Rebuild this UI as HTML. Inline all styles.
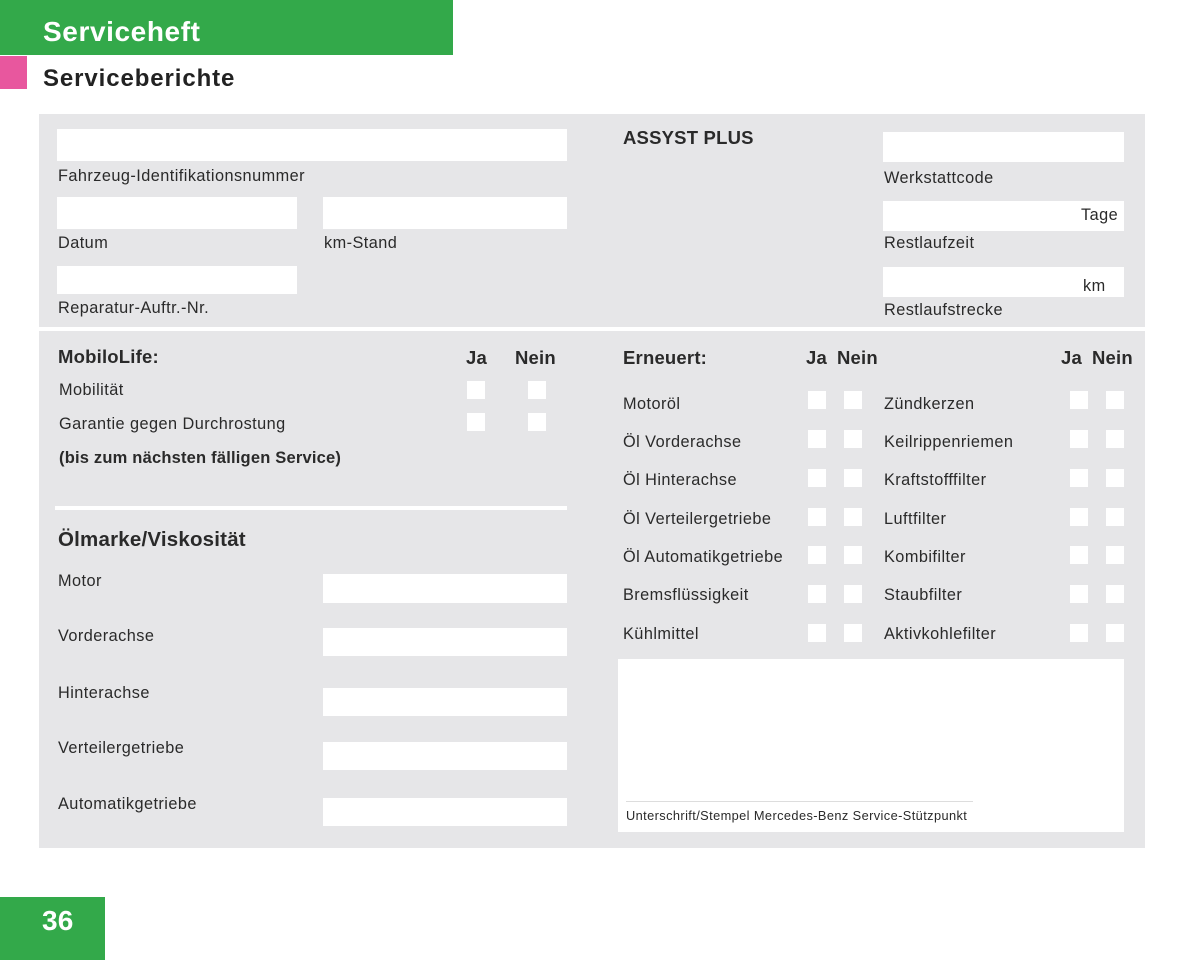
<!DOCTYPE html>
<html><head><meta charset="utf-8"><style>
*{margin:0;padding:0;box-sizing:border-box}
body{width:1200px;height:960px;background:#fff;position:relative;overflow:hidden;font-family:"Liberation Sans",sans-serif;color:#2a2a2a}
div{position:absolute}
.t{font-size:16.3px;line-height:18px;white-space:nowrap;letter-spacing:0.45px}
.b{font-weight:bold;font-size:18.5px;line-height:20px;white-space:nowrap;letter-spacing:0.2px}
.w{background:#fff}
.c{background:#fff;width:18px;height:18px}
</style></head><body>
<div style="left:0;top:0;width:453px;height:55px;background:#33a94a"></div>
<div class="b" style="left:43px;top:16px;font-size:28px;line-height:32px;color:#fff;letter-spacing:0.6px">Serviceheft</div>
<div style="left:0;top:56px;width:27px;height:33px;background:#e8579e"></div>
<div class="b" style="left:43px;top:65px;font-size:24px;line-height:28px;color:#222;letter-spacing:0.9px">Serviceberichte</div>

<div style="left:39px;top:114px;width:1106px;height:734px;background:#e6e6e8"></div>
<div class="w" style="left:39px;top:327px;width:1106px;height:4px"></div>

<div class="w" style="left:57px;top:129px;width:510px;height:32px"></div>
<div class="t" style="left:58px;top:167px">Fahrzeug-Identifikationsnummer</div>
<div class="w" style="left:57px;top:197px;width:240px;height:32px"></div>
<div class="t" style="left:58px;top:234px">Datum</div>
<div class="w" style="left:323px;top:197px;width:244px;height:32px"></div>
<div class="t" style="left:324px;top:234px">km-Stand</div>
<div class="w" style="left:57px;top:266px;width:240px;height:28px"></div>
<div class="t" style="left:58px;top:299px">Reparatur-Auftr.-Nr.</div>

<div class="b" style="left:623px;top:128px">ASSYST PLUS</div>
<div class="w" style="left:883px;top:132px;width:241px;height:30px"></div>
<div class="t" style="left:884px;top:169px">Werkstattcode</div>
<div class="w" style="left:883px;top:201px;width:241px;height:30px"></div>
<div class="t" style="left:1081px;top:206px">Tage</div>
<div class="t" style="left:884px;top:234px">Restlaufzeit</div>
<div class="w" style="left:883px;top:267px;width:241px;height:30px"></div>
<div class="t" style="left:1083px;top:277px">km</div>
<div class="t" style="left:884px;top:301px">Restlaufstrecke</div>

<div class="b" style="left:58px;top:347px">MobiloLife:</div>
<div class="b" style="left:466px;top:348px">Ja</div>
<div class="b" style="left:515px;top:348px">Nein</div>
<div class="t" style="left:59px;top:381px">Mobilität</div>
<div class="c" style="left:467px;top:381px"></div><div class="c" style="left:528px;top:381px"></div>
<div class="t" style="left:59px;top:415px">Garantie gegen Durchrostung</div>
<div class="c" style="left:467px;top:413px"></div><div class="c" style="left:528px;top:413px"></div>
<div class="b" style="left:59px;top:448px;font-size:16.5px">(bis zum nächsten fälligen Service)</div>
<div class="w" style="left:55px;top:506px;width:512px;height:4px"></div>

<div class="b" style="left:58px;top:529px;font-size:20.5px;line-height:22px">Ölmarke/Viskosität</div>
<div class="t" style="left:58px;top:572px">Motor</div>
<div class="w" style="left:323px;top:574px;width:244px;height:29px"></div>
<div class="t" style="left:58px;top:627px">Vorderachse</div>
<div class="w" style="left:323px;top:628px;width:244px;height:28px"></div>
<div class="t" style="left:58px;top:684px">Hinterachse</div>
<div class="w" style="left:323px;top:688px;width:244px;height:28px"></div>
<div class="t" style="left:58px;top:739px">Verteilergetriebe</div>
<div class="w" style="left:323px;top:742px;width:244px;height:28px"></div>
<div class="t" style="left:58px;top:795px">Automatikgetriebe</div>
<div class="w" style="left:323px;top:798px;width:244px;height:28px"></div>

<div class="b" style="left:623px;top:348px">Erneuert:</div>
<div class="b" style="left:806px;top:348px">Ja</div>
<div class="b" style="left:837px;top:348px">Nein</div>
<div class="b" style="left:1061px;top:348px">Ja</div>
<div class="b" style="left:1092px;top:348px">Nein</div>

<div class="t" style="left:623px;top:395px">Motoröl</div>
<div class="t" style="left:623px;top:433px">Öl Vorderachse</div>
<div class="t" style="left:623px;top:471px">Öl Hinterachse</div>
<div class="t" style="left:623px;top:510px">Öl Verteilergetriebe</div>
<div class="t" style="left:623px;top:548px">Öl Automatikgetriebe</div>
<div class="t" style="left:623px;top:586px">Bremsflüssigkeit</div>
<div class="t" style="left:623px;top:625px">Kühlmittel</div>
<div class="t" style="left:884px;top:395px">Zündkerzen</div>
<div class="t" style="left:884px;top:433px">Keilrippenriemen</div>
<div class="t" style="left:884px;top:471px">Kraftstofffilter</div>
<div class="t" style="left:884px;top:510px">Luftfilter</div>
<div class="t" style="left:884px;top:548px">Kombifilter</div>
<div class="t" style="left:884px;top:586px">Staubfilter</div>
<div class="t" style="left:884px;top:625px">Aktivkohlefilter</div>

<div class="c" style="left:808px;top:391px"></div><div class="c" style="left:844px;top:391px"></div><div class="c" style="left:1070px;top:391px"></div><div class="c" style="left:1106px;top:391px"></div>
<div class="c" style="left:808px;top:430px"></div><div class="c" style="left:844px;top:430px"></div><div class="c" style="left:1070px;top:430px"></div><div class="c" style="left:1106px;top:430px"></div>
<div class="c" style="left:808px;top:469px"></div><div class="c" style="left:844px;top:469px"></div><div class="c" style="left:1070px;top:469px"></div><div class="c" style="left:1106px;top:469px"></div>
<div class="c" style="left:808px;top:508px"></div><div class="c" style="left:844px;top:508px"></div><div class="c" style="left:1070px;top:508px"></div><div class="c" style="left:1106px;top:508px"></div>
<div class="c" style="left:808px;top:546px"></div><div class="c" style="left:844px;top:546px"></div><div class="c" style="left:1070px;top:546px"></div><div class="c" style="left:1106px;top:546px"></div>
<div class="c" style="left:808px;top:585px"></div><div class="c" style="left:844px;top:585px"></div><div class="c" style="left:1070px;top:585px"></div><div class="c" style="left:1106px;top:585px"></div>
<div class="c" style="left:808px;top:624px"></div><div class="c" style="left:844px;top:624px"></div><div class="c" style="left:1070px;top:624px"></div><div class="c" style="left:1106px;top:624px"></div>

<div class="w" style="left:618px;top:659px;width:506px;height:173px"></div>
<div style="left:626px;top:801px;width:347px;height:1px;background:#ddd"></div>
<div class="t" style="left:626px;top:808px;font-size:12.8px;line-height:16px;letter-spacing:0.4px">Unterschrift/Stempel Mercedes-Benz Service-Stützpunkt</div>

<div style="left:0;top:897px;width:105px;height:63px;background:#33a94a"></div>
<div class="b" style="left:42px;top:905px;font-size:28px;line-height:32px;color:#fff">36</div>
</body></html>
